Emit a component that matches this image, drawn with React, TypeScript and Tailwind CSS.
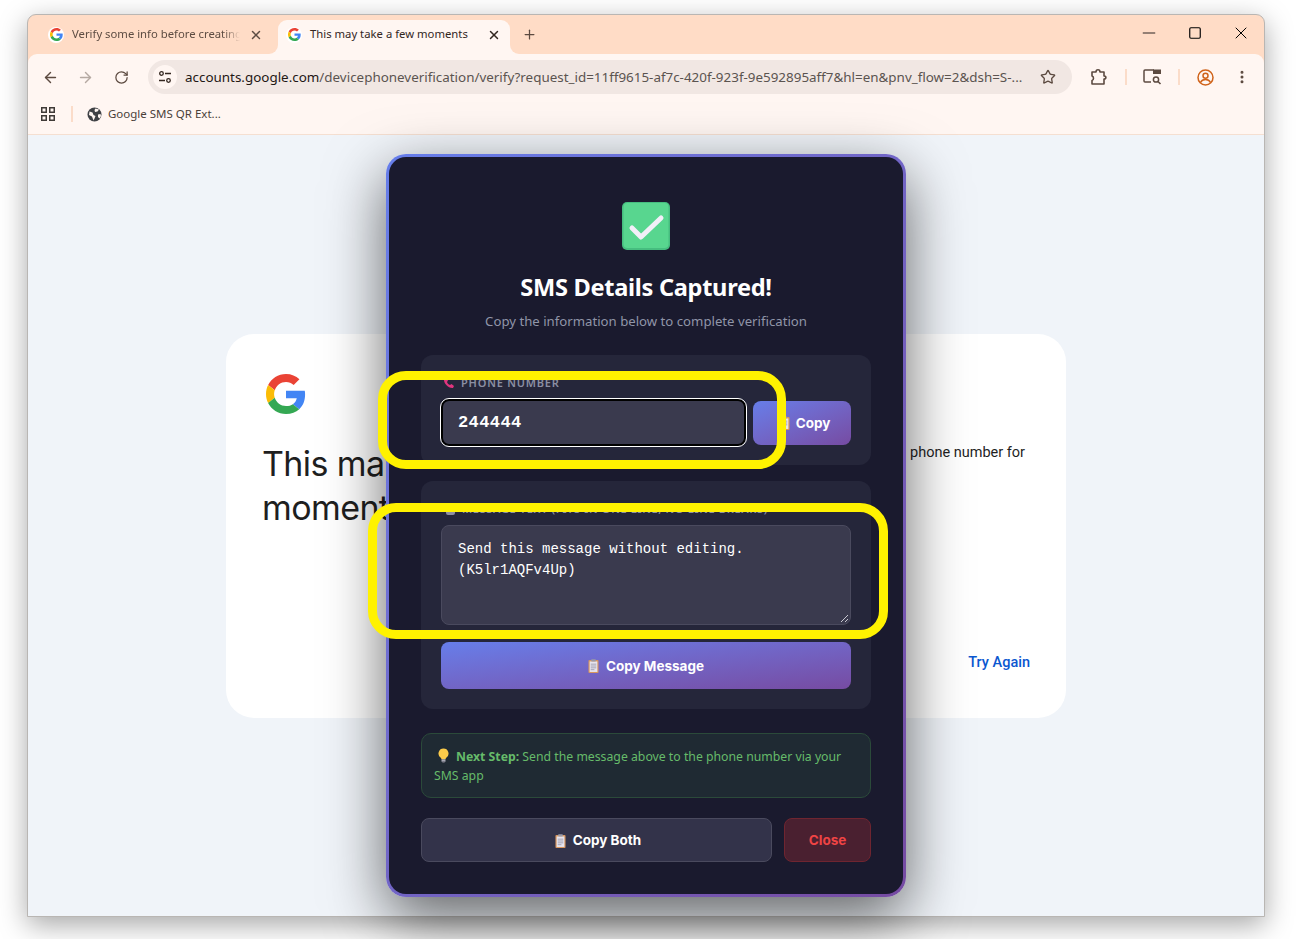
import React from 'react';
import { ArrowLeft, ArrowRight, RotateCw, Star, MoreVertical, Plus, X, Minus, Square } from 'lucide-react';

const GoogleG = ({ size = 16 }: { size?: number }) => (
  <svg width={size} height={size} viewBox="0 0 48 48" className="shrink-0">
    <path fill="#EA4335" d="M24 9.500c3.500 0 6.700 1.200 9.200 3.600l6.900-6.900C35.900 2.400 30.500 0 24 0 14.600 0 6.500 5.400 2.600 13.200l8 6.200C12.400 13.700 17.700 9.500 24 9.500z" />
    <path fill="#4285F4" d="M46.900 24.500c0-1.600-.1-3.100-.4-4.500H24v9h12.900c-.6 3-2.200 5.500-4.700 7.200l7.700 6c4.500-4.200 7-10.300 7-17.700z" />
    <path fill="#FBBC05" d="M10.500 28.600c-.5-1.400-.8-3-.8-4.600s.3-3.200.8-4.600l-8-6.200C.9 16.500 0 20.100 0 24s.9 7.500 2.600 10.800l7.900-6.200z" />
    <path fill="#34A853" d="M24 48c6.500 0 11.900-2.100 15.900-5.800l-7.700-6c-2.100 1.400-4.900 2.300-8.200 2.300-6.300 0-11.600-4.200-13.500-9.900l-8 6.200C6.500 42.600 14.600 48 24 48z" />
  </svg>
);

const Favicon = () => (
  <span className="flex h-[16px] w-[16px] shrink-0 items-center justify-center rounded-full bg-white">
    <GoogleG size={13} />
  </span>
);

const Clipboard = () => (
  <svg width="11" height="14" viewBox="0 0 12 15" className="shrink-0">
    <rect x="0.500" y="1" width="11" height="14" rx="1" fill="#d9975f" />
    <rect x="1.800" y="2.500" width="8.400" height="11.500" fill="#e6e4ee" />
    <rect x="3.500" y="0" width="5" height="2.500" rx="0.600" fill="#9a9aa8" />
    <path d="M3 5.500h6M3 7.500h6M3 9.500h6M3 11.500h4" stroke="#8f8fa3" strokeWidth="0.800" />
  </svg>
);

const Bulb = () => (
  <svg width="11" height="15" viewBox="0 0 11 15" className="shrink-0">
    <path d="M5.500 0.500a5 5 0 0 0-3 9c.6.5.9 1 .9 1.800h4.200c0-.8.3-1.300.9-1.800a5 5 0 0 0-3-9z" fill="#fbcb4a" />
    <rect x="3.500" y="11.300" width="4" height="2.400" rx="0.500" fill="#a9a9b5" />
    <rect x="4.300" y="13.500" width="2.400" height="1.200" rx="0.500" fill="#6d6d78" />
  </svg>
);

const App: React.FC = () => {
  const chromeIcon = 'text-[#5c4a40]';
  return (
    <div className="relative h-[939px] w-[1307px] overflow-hidden bg-white font-['Noto_Sans',sans-serif]">
      {/* browser window */}
      <div className="relative ml-[27px] mt-[14px] flex h-[903px] w-[1238px] flex-col overflow-hidden rounded-t-[9px] border border-[#b9b6b3] bg-[#ffdcc6] shadow-[0_8px_28px_rgba(0,0,0,0.35)]">
        {/* tab strip */}
        <div className="flex h-[39px] shrink-0 items-end pl-[8px]">
          <div className="flex h-[34px] w-[242px] shrink-0 items-center pb-[5px] pl-[12px] pr-[15px]">
            <Favicon />
            <span className="ml-[8px] w-[168px] overflow-hidden whitespace-nowrap text-[11.300px] text-[#5d4c42] [mask-image:linear-gradient(to_right,black_90%,transparent)]">Verify some info before creating</span>
            <X size={14} strokeWidth={2.500} className="ml-auto text-[#5d4c42]" />
          </div>
          <div className="relative flex h-[34px] w-[232px] shrink-0 items-center rounded-t-[9px] bg-[#fff6f2] pb-[5px] pl-[8px] pr-[9px]">
            <span className="absolute -left-[9px] bottom-0 h-[9px] w-[9px] bg-[#fff6f2]">
              <span className="block h-full w-full rounded-br-[9px] bg-[#ffdcc6]" />
            </span>
            <span className="absolute -right-[9px] bottom-0 h-[9px] w-[9px] bg-[#fff6f2]">
              <span className="block h-full w-full rounded-bl-[9px] bg-[#ffdcc6]" />
            </span>
            <Favicon />
            <span className="ml-[8px] whitespace-nowrap text-[11.300px] text-[#33261f]">This may take a few moments</span>
            <X size={14} strokeWidth={2.500} className="ml-auto text-[#33261f]" />
          </div>
          <div className="ml-[12px] flex h-[34px] items-center pb-[5px]">
            <Plus size={15} strokeWidth={2} className={chromeIcon} />
          </div>
          <div className="ml-auto flex h-[39px] items-center pb-[3px]">
            <span className="flex w-[46px] justify-center"><Minus size={20} strokeWidth={1} className="text-black" /></span>
            <span className="flex w-[46px] justify-center"><Square size={14} strokeWidth={2} className="text-black" /></span>
            <span className="flex w-[46px] justify-center"><X size={20} strokeWidth={1.200} className="text-black" /></span>
          </div>
        </div>

        {/* toolbar */}
        <div className="flex h-[41px] shrink-0 items-center rounded-t-[9px] bg-[#fff6f2] pl-[14px] pr-[13px] pt-[5px]">
          <ArrowLeft size={17} strokeWidth={2} className={chromeIcon} />
          <ArrowRight size={17} strokeWidth={2} className="ml-[18px] text-[#b5a9a2]" />
          <RotateCw size={15} strokeWidth={2} className={`ml-[20px] ${chromeIcon}`} />
          <div className="ml-[19px] flex h-[34px] w-[924px] items-center rounded-full bg-[#f1e7e3] pl-[5px] pr-[16px]">
            <span className="flex h-[24px] w-[24px] shrink-0 items-center justify-center rounded-full bg-[#fff6f2]">
              <svg width="14" height="14" viewBox="0 0 14 14" fill="none" stroke="#33261f" strokeWidth="1.300">
                <circle cx="3.500" cy="3.500" r="1.800" />
                <path d="M7 3.500h6M1 10.500h6" />
                <circle cx="10.500" cy="10.500" r="1.800" />
              </svg>
            </span>
            <span className="ml-[8px] w-[845px] shrink-0 whitespace-nowrap text-[13.420px] text-[#5b5450]">
              <span className="text-[#1f1815]">accounts.google.com</span>/devicephoneverification/verify?request_id=11ff9615-af7c-420f-923f-9e592895aff7&amp;hl=en&amp;pnv_flow=2&amp;dsh=S-...
            </span>
            <Star size={16} strokeWidth={2} className={`ml-auto ${chromeIcon}`} />
          </div>
          <svg width="18" height="18" viewBox="0 0 18 18" className="ml-[18px]" fill="none" stroke="#5c4a40" strokeWidth="1.600">
            <path d="M2 4h4c0-3 4-3 4 0h4v4c2.500 0 2.500 3 0 3v5H2v-3.500c2-.2 2-4 0-4.500V4z" strokeLinejoin="round" />
          </svg>
          <span className="ml-[17px] h-[16px] w-[2px] bg-[#fbdcc9]" />
          <svg width="19" height="16" viewBox="0 0 19 16" className="ml-[16px]" fill="none">
            <path d="M8 13H2a1 1 0 0 1-1-1V2a1 1 0 0 1 1-1h9" stroke="#5c4a40" strokeWidth="1.500" />
            <rect x="10" y="0.500" width="8" height="4.500" fill="#5c4a40" />
            <circle cx="13" cy="10.500" r="2.600" stroke="#5c4a40" strokeWidth="1.500" />
            <path d="M15 12.500l2.500 2.500" stroke="#5c4a40" strokeWidth="1.600" />
          </svg>
          <span className="ml-[16px] h-[16px] w-[2px] bg-[#fbdcc9]" />
          <svg width="17" height="17" viewBox="0 0 17 17" className="ml-[17px]" fill="none" stroke="#d0631a" strokeWidth="1.500">
            <circle cx="8.500" cy="8.500" r="7.500" />
            <circle cx="8.500" cy="6.800" r="2.500" />
            <path d="M3.500 13.500c1-2.200 3-3 5-3s4 .8 5 3" />
          </svg>
          <MoreVertical size={16} strokeWidth={2.500} className={`ml-[20px] ${chromeIcon}`} />
        </div>

        {/* bookmarks bar */}
        <div className="flex h-[40px] shrink-0 items-center border-b border-[#f5dfd1] bg-[#fff6f2] pb-[1px] pl-[12px]">
          <svg width="16" height="16" viewBox="0 0 16 16" fill="none" stroke="#3f3a37" strokeWidth="1.500">
            <rect x="1.750" y="1.750" width="4.500" height="4.500" />
            <rect x="9.750" y="1.750" width="4.500" height="4.500" />
            <rect x="1.750" y="9.750" width="4.500" height="4.500" />
            <rect x="9.750" y="9.750" width="4.500" height="4.500" />
          </svg>
          <span className="ml-[15px] h-[16px] w-[2px] bg-[#fbdcc9]" />
          <svg width="15" height="15" viewBox="0 0 15 15" className="ml-[14px]">
            <circle cx="7.500" cy="7.500" r="7" fill="#3f4145" />
            <path d="M2.500 4.500l3 1 1 2.500 2 1-1 2.500-1 2-1.500-4-3-1.500zM8.500 1.500l3.500 1-1.500 2-2.500.5-.5-2zM11 7.500l2.500-.5.500 2-1.500 2.500-1.500-1.500z" fill="#fff6f2" />
          </svg>
          <span className="ml-[6px] text-[11.500px] text-[#4a3f39]">Google SMS QR Ext...</span>
        </div>

        {/* page */}
        <div className="flex flex-1 justify-center bg-[#f0f4f9] pt-[199px]">
          <div className="flex h-[384px] w-[840px] flex-col rounded-[28px] bg-white pl-[36px] pr-[36px] pt-[40px]">
            <div className="ml-[4px]"><GoogleG size={40} /></div>
            <div className="mt-[28px] flex justify-between">
              <h1 className="w-[420px] font-['Inter',sans-serif] text-[34px] font-normal leading-[44px] tracking-[-0.600px] text-[#1f1f1f]">This may take a few moments</h1>
              <p className="mr-[5px] whitespace-nowrap text-right font-['Roboto',sans-serif] text-[14.500px] text-[#1f1f1f]">phone number for</p>
            </div>
            <div className="mb-[44px] mt-auto text-right font-['Roboto',sans-serif] text-[14.500px] font-medium text-[#0b57d0]">Try Again</div>
          </div>
        </div>
      </div>

      {/* modal */}
      <div className="absolute left-[386px] top-[154px] h-[743px] w-[520px] rounded-[20px] bg-gradient-to-br from-[#667eea] to-[#764ba2] p-[3px] shadow-[0_20px_60px_rgba(0,0,0,0.6)]">
        <div className="flex h-full flex-col rounded-[17px] bg-[#1a1a2e] px-[32px] pt-[45px]">
          <div className="flex flex-col items-center">
            <svg width="48" height="48" viewBox="0 0 48 48">
              <rect width="48" height="48" rx="5" fill="#46bd7f" />
              <rect x="1.500" y="1" width="45" height="45" rx="4" fill="#58d68f" />
              <path d="M10 26l9 9L39 16" fill="none" stroke="#f2eff8" strokeWidth="5" strokeLinecap="round" strokeLinejoin="round" />
            </svg>
            <h2 className="mt-[19px] text-[23.600px] font-bold leading-[36px] tracking-[-0.300px] text-white">SMS Details Captured!</h2>
            <p className="mt-[6px] text-[13.200px] leading-[21px] text-[#9095a8]">Copy the information below to complete verification</p>
          </div>

          <div className="mt-[23px] h-[110px] rounded-[12px] bg-[#25263a] px-[20px] pt-[20px]">
            <div className="flex h-[16px] items-center gap-[6px] pl-[2px] text-[11px] font-semibold tracking-[0.800px] text-[#8b8fa3]">
              <svg width="12" height="12" viewBox="0 0 24 24" className="shrink-0">
                <path d="M6 2l4 5-2 3c1 3 3 5 6 6l3-2 5 4-2 4c-9 1-19-9-18-18z" fill="#e0357e" />
              </svg>
              <span>PHONE NUMBER</span>
            </div>
            <div className="mt-[8px] flex items-center gap-[7px]">
              <div className="flex h-[47px] w-[305px] items-center rounded-[8px] border-[2px] border-black bg-[#3a3a4e] pl-[15px] font-['Liberation_Mono',monospace] text-[17px] font-bold tracking-[0.400px] text-white outline outline-1 outline-white">244444</div>
              <button className="flex h-[44px] flex-1 items-center justify-center gap-[6px] rounded-[8px] bg-gradient-to-br from-[#667eea] to-[#764ba2] pl-[5px] pt-[1px] font-['Inter',sans-serif] text-[13.500px] font-bold text-white">
                <Clipboard />
                Copy
              </button>
            </div>
          </div>

          <div className="mt-[16px] h-[228px] rounded-[12px] bg-[#25263a] px-[20px] pt-[20px]">
            <div className="flex h-[16px] items-center gap-[7px] pl-[5px] text-[11px] font-semibold tracking-[0.650px] text-[#8b8fa3]">
              <span className="h-[12px] w-[9px] rounded-[2px] bg-[#8f8fa3]" />
              <span>MESSAGE TEXT (FITS IN ONE LINE, NO LINE BREAKS)</span>
            </div>
            <div className="relative mt-[8px] h-[100px] rounded-[8px] border border-[#4a4a5e] bg-[#3a3a4e] px-[16px] pt-[13px] font-['Liberation_Mono',monospace] text-[14px] leading-[21px] text-white">
              <div>Send this message without editing.</div>
              <div>(K5lr1AQFv4Up)</div>
              <svg width="9" height="9" viewBox="0 0 9 9" className="absolute bottom-[1px] right-[1px]">
                <path d="M1 8l7-7M5 8l3-3" stroke="#c9c9d2" strokeWidth="1" />
              </svg>
            </div>
            <button className="mt-[17px] flex h-[47px] w-full items-center justify-center gap-[7px] rounded-[8px] bg-gradient-to-br from-[#667eea] to-[#764ba2] pt-[1px] font-['Inter',sans-serif] text-[13.500px] font-bold text-white">
              <Clipboard />
              Copy Message
            </button>
          </div>

          <div className="mt-[24px] h-[65px] rounded-[10px] border border-[#2b4a3a] bg-[#1f2a33] px-[12px] pt-[13px] text-[12.260px] leading-[19px] text-[#66bb6a]">
            <span className="ml-[4px] mr-[7px] inline-block align-[-2px]"><Bulb /></span>
            <strong className="font-bold">Next Step:</strong> Send the message above to the phone number via your SMS app
          </div>

          <div className="mt-[20px] flex gap-[12px]">
            <button className="flex h-[44px] flex-1 items-center justify-center gap-[7px] rounded-[8px] border border-[#4a4a5e] bg-[#33334a] pl-[3px] pt-[1px] font-['Inter',sans-serif] text-[13.500px] font-bold text-white">
              <Clipboard />
              Copy Both
            </button>
            <button className="flex h-[44px] w-[87px] items-center justify-center rounded-[8px] border border-[#6f2530] bg-[#4a2030] font-['Inter',sans-serif] text-[13.500px] font-bold text-[#ef4444]">Close</button>
          </div>
        </div>
      </div>

      {/* yellow annotations */}
      <div className="absolute left-[378px] top-[371px] h-[98px] w-[408px] rounded-[28px] border-[9px] border-[#fff200]" />
      <div className="absolute left-[368px] top-[503px] h-[136px] w-[520px] rounded-[28px] border-[9px] border-[#fff200]" />
    </div>
  );
};

export default App;
